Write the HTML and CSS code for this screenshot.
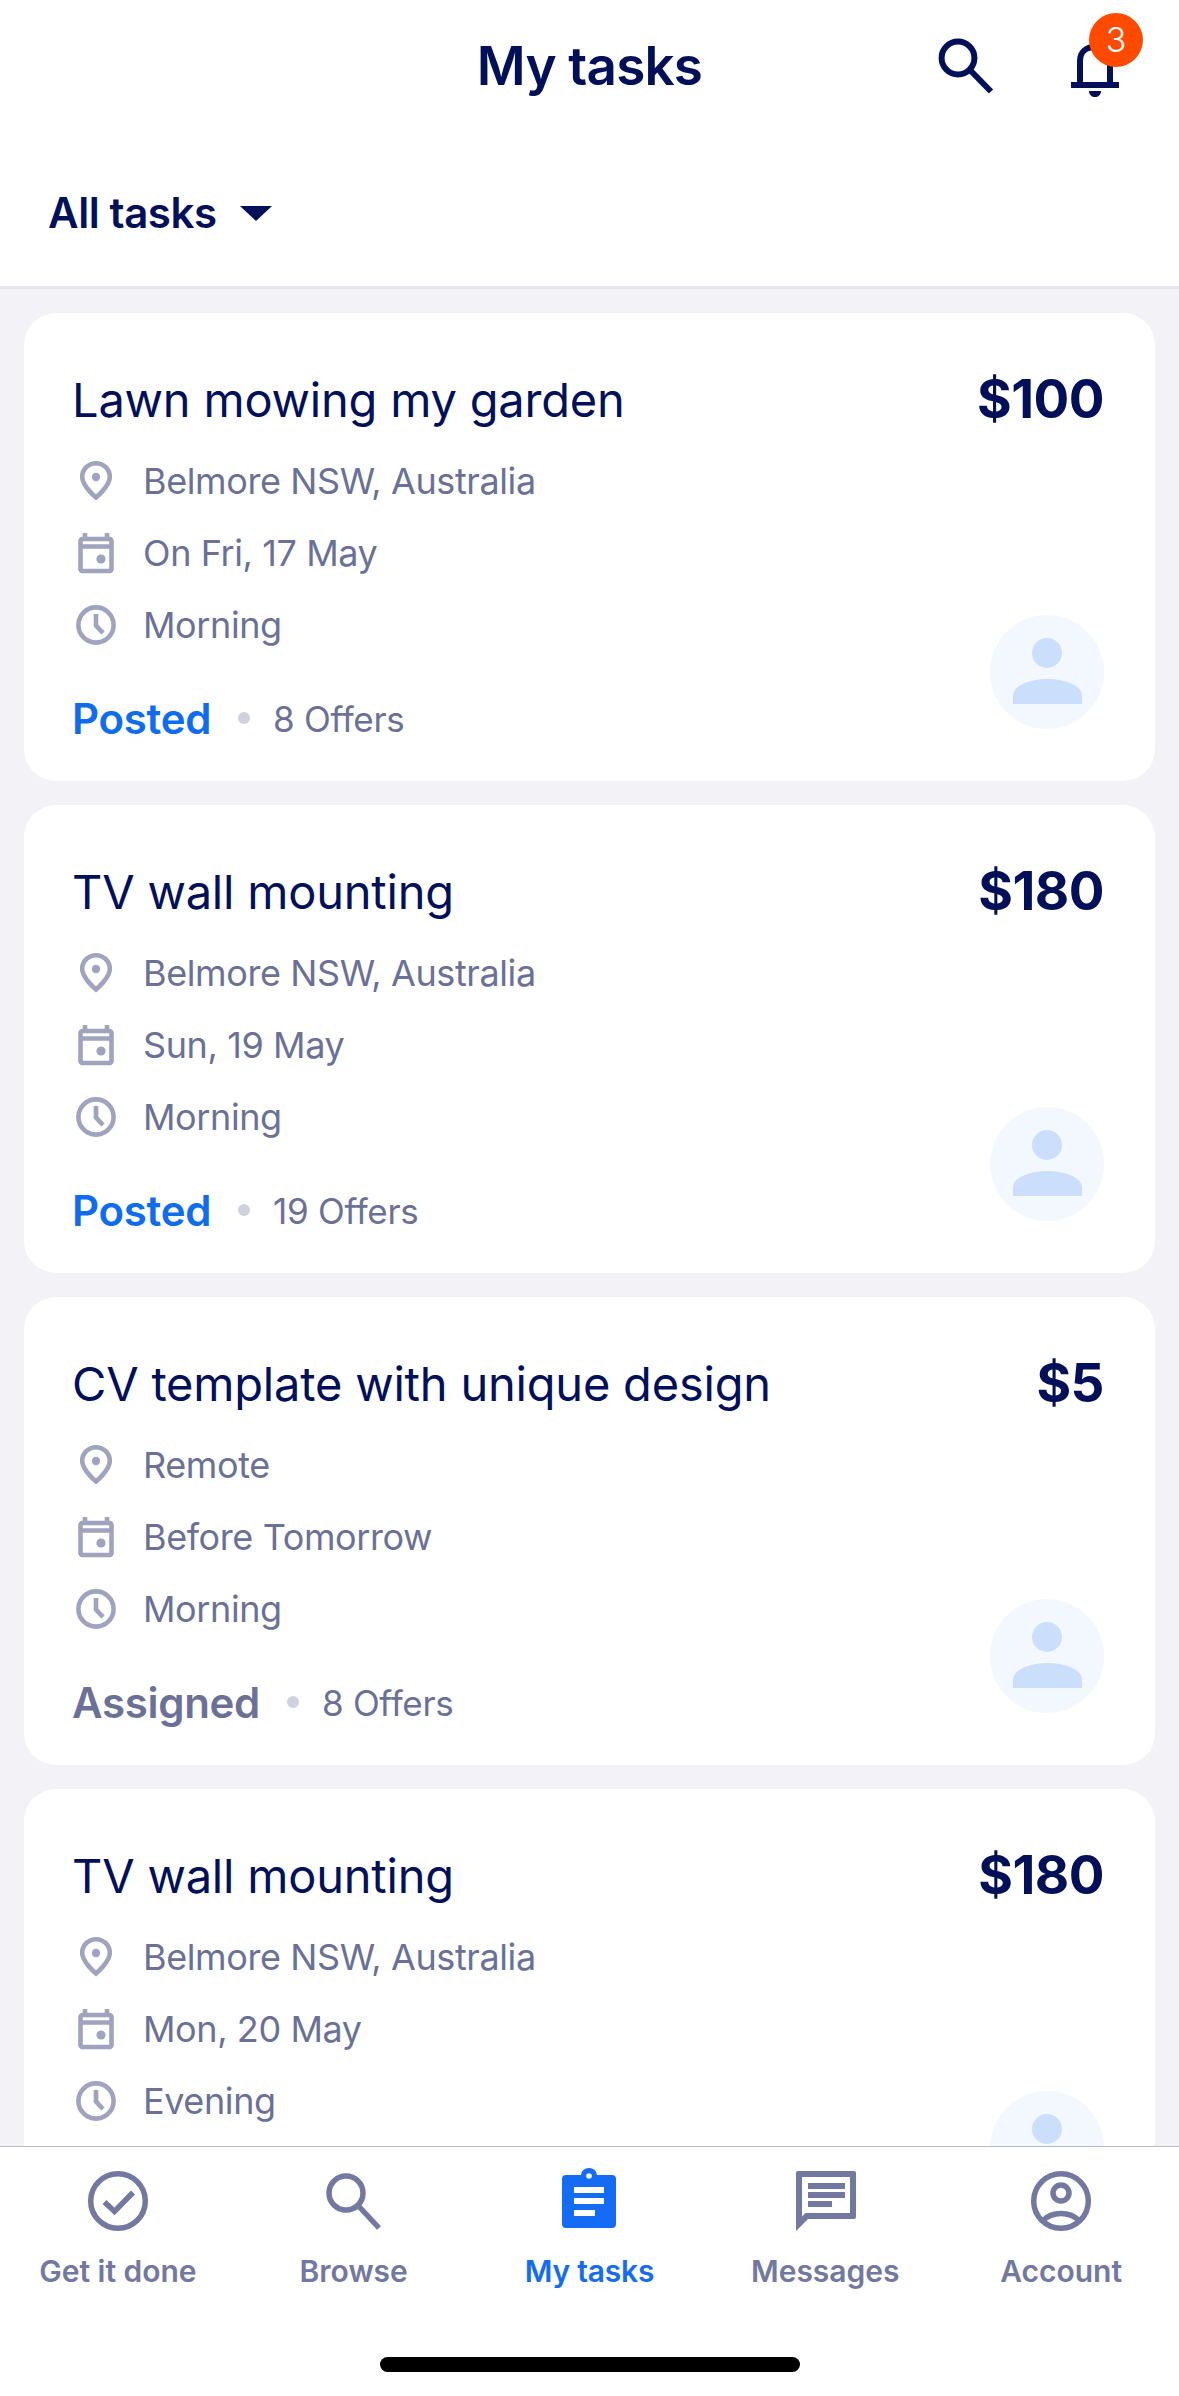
FILE: index.html
```html
<!DOCTYPE html>
<html lang="en"><head>
	<meta charset='utf-8'>
	<title>My tasks</title>
	<link rel="stylesheet" href="styles.css">
</head><body>
<svg class="defs" width="0" height="0">
	<symbol id="i-pin" viewBox="0 0 48 48"><path class="line" d="M24 40.5C24 40.5 10.2 29 10.2 20A13.8 13.8 0 0 1 37.8 20C37.8 29 24 40.5 24 40.5Z"/><circle class="solid" cx="24" cy="20" r="4.2"/></symbol>
	<symbol id="i-cal" viewBox="0 0 48 48"><rect class="line" x="8.5" y="10" width="31" height="32" rx="2"/><path class="line" d="M8 17.5H40M13 4V9M35 4V9"/><circle class="solid" cx="29" cy="30" r="4.6"/></symbol>
	<symbol id="i-clock" viewBox="0 0 48 48"><circle class="line" cx="24" cy="24" r="17.6"/><path class="line" d="M24 13V24.500L31 32"/></symbol>
</svg>
<div class="app">
	<header class="top">
		<div class="top-bar">
			<h1>My tasks</h1>
			<svg class="top-search" width="60" height="60" viewBox="0 0 60 60"><circle cx="24" cy="24" r="16.400"/><path d="M35.500 35.500L57 57.500"/></svg>
			<span class="bell">
				<svg width="48" height="60" viewBox="0 0 48 60"><path d="M9 46V22C9 13 15 8 24 8C33 8 39 13 39 22V46"/><rect class="fill" x="0" y="43" width="48" height="6"/><path class="fill" d="M18 52H30C30 56 27 58 24 58C21 58 18 56 18 52Z"/></svg>
				<span class="badge">3</span>
			</span>
		</div>
		<div class="filter">All tasks <i class="caret"></i></div>
	</header>

	<main class="tasks">
		<article class="card">
			<div class="card-main">
				<h2>Lawn mowing my garden</h2>
				<ul class="facts">
					<li><svg><use href="#i-pin"/></svg>Belmore NSW, Australia</li>
					<li><svg><use href="#i-cal"/></svg>On Fri, 17 May</li>
					<li><svg><use href="#i-clock"/></svg>Morning</li>
				</ul>
				<div class="status"><b class="posted">Posted</b><i class="dot"></i><span>8 Offers</span></div>
			</div>
			<div class="card-side">
				<div class="price">$100</div>
				<div class="avatar"><i></i><u></u></div>
			</div>
		</article>
		<article class="card">
			<div class="card-main">
				<h2>TV wall mounting</h2>
				<ul class="facts">
					<li><svg><use href="#i-pin"/></svg>Belmore NSW, Australia</li>
					<li><svg><use href="#i-cal"/></svg>Sun, 19 May</li>
					<li><svg><use href="#i-clock"/></svg>Morning</li>
				</ul>
				<div class="status"><b class="posted">Posted</b><i class="dot"></i><span>19 Offers</span></div>
			</div>
			<div class="card-side">
				<div class="price">$180</div>
				<div class="avatar"><i></i><u></u></div>
			</div>
		</article>
		<article class="card">
			<div class="card-main">
				<h2>CV template with unique design</h2>
				<ul class="facts">
					<li><svg><use href="#i-pin"/></svg>Remote</li>
					<li><svg><use href="#i-cal"/></svg>Before Tomorrow</li>
					<li><svg><use href="#i-clock"/></svg>Morning</li>
				</ul>
				<div class="status"><b class="assigned">Assigned</b><i class="dot"></i><span>8 Offers</span></div>
			</div>
			<div class="card-side">
				<div class="price">$5</div>
				<div class="avatar"><i></i><u></u></div>
			</div>
		</article>
		<article class="card">
			<div class="card-main">
				<h2>TV wall mounting</h2>
				<ul class="facts">
					<li><svg><use href="#i-pin"/></svg>Belmore NSW, Australia</li>
					<li><svg><use href="#i-cal"/></svg>Mon, 20 May</li>
					<li><svg><use href="#i-clock"/></svg>Evening</li>
				</ul>
			</div>
			<div class="card-side">
				<div class="price">$180</div>
				<div class="avatar"><i></i><u></u></div>
			</div>
		</article>
	</main>

	<nav class="tabs">
		<a class="tab">
			<svg viewBox="0 0 64 64"><circle cx="32" cy="33" r="27.300"/><path d="M18.500 34L28.500 43.500L47 24.500"/></svg>
			Get it done
		</a>
		<a class="tab">
			<svg viewBox="0 0 64 64"><circle cx="24" cy="25" r="17"/><path d="M36.500 38L57 60"/></svg>
			Browse
		</a>
		<a class="tab active">
			<svg viewBox="0 0 64 64"><path class="fill" d="M9 7H24A8 7 0 0 1 40 7H55A4 4 0 0 1 59 11V56A4 4 0 0 1 55 60H9A4 4 0 0 1 5 56V11A4 4 0 0 1 9 7Z"/><circle class="hole" cx="32" cy="8" r="2.800"/><rect class="hole" x="17" y="19" width="30" height="6"/><rect class="hole" x="17" y="30" width="30" height="6"/><rect class="hole" x="17" y="42" width="21" height="6"/></svg>
			My tasks
		</a>
		<a class="tab">
			<svg viewBox="0 0 64 64"><path class="fill" fill-rule="evenodd" d="M5 3H61A2 2 0 0 1 63 5V49A2 2 0 0 1 61 51H15L3 63V5A2 2 0 0 1 5 3ZM9 9V48.500L12.500 45H57V9Z"/><rect class="fill" x="15" y="15" width="37" height="6"/><rect class="fill" x="15" y="24" width="37" height="6"/><rect class="fill" x="15" y="33" width="24" height="6"/></svg>
			Messages
		</a>
		<a class="tab">
			<svg viewBox="0 0 64 64"><circle cx="32" cy="33" r="27.300"/><circle cx="32" cy="25" r="8"/><path d="M13.500 53C23 43 41 43 50.500 53"/></svg>
			Account
		</a>
	</nav>
	<div class="home-bar"><span></span></div>
</div>
</body></html>
```

FILE: styles.css
```css
* { box-sizing:border-box; margin:0; padding:0 }
html, body { height:100%; background:#fff }
body { font-family:Inter, 'Noto Sans', sans-serif; color:#011059 }
.defs { display:block; height:0 }
.app { width:1179px; height:2396px; display:flex; flex-direction:column; overflow:hidden }

/* header */
.top { height:289px; background:#fff; border-bottom:3px solid #e6e6ec; flex:none }
.top-bar { height:144px; display:flex; align-items:flex-start; padding-left:934px; position:relative }
.top-bar h1 { position:absolute; left:0; right:0; top:35px; line-height:62px; text-align:center; font-size:53px; font-weight:600; letter-spacing:-0.8px }
.top-search { margin-top:34px; flex:none; fill:none; stroke:#011059; stroke-width:6 }
.bell { margin:39px 0 0 77px; position:relative; display:block; width:48px; height:60px }
.bell svg { display:block; fill:none; stroke:#011059; stroke-width:6 }
.bell .fill { fill:#011059; stroke:none }
.badge { position:absolute; left:18px; top:-26px; width:54px; height:54px; border-radius:50%; background:#ff4a00; color:#fff; font-size:34px; font-weight:300; line-height:54px; text-align:center }
.filter { padding-left:48px; display:flex; align-items:center; font-size:42px; font-weight:600; line-height:52px; letter-spacing:-0.4px; margin-top:43px }
.caret { width:0; height:0; margin-left:23px; border-style:solid; border-width:15px 16px 0; border-color:#011059 transparent transparent }

/* task cards */
.tasks { flex:1; min-height:0; overflow:hidden; background:#f2f2f7; padding:24px 24px 0; display:flex; flex-direction:column; gap:24px }
.card { flex:none; height:468px; background:#fff; border-radius:32px; padding:60px 51px 33px 48px; display:flex; justify-content:space-between }
.card h2 { font-size:47px; font-weight:400; line-height:54px; letter-spacing:-0.2px; white-space:nowrap }
.facts { list-style:none; margin-top:18px }
.facts li { height:72px; display:flex; align-items:center; gap:23px; font-size:36px; color:#6b7196; letter-spacing:-0.4px }
.facts svg { width:48px; height:48px; flex:none }
.line { fill:none; stroke:#9fa3bd; stroke-width:4.6 }
.solid { fill:#9fa3bd }
.status { margin-top:27px; height:60px; display:flex; align-items:center; font-size:35px; color:#6b7196; letter-spacing:-0.3px }
.status b { font-size:42px; font-weight:600 }
.status span { padding-top:2px }
.posted { color:#0d6cf2 }
.assigned { color:#6b7196 }
.dot { width:12px; height:12px; border-radius:50%; background:#cfd1de; margin:0 23px 0 27px }
.card-side { display:flex; flex-direction:column; justify-content:space-between; align-items:flex-end; padding-bottom:19px }
.price { font-size:53px; font-weight:700; line-height:52px; letter-spacing:-0.5px }
.avatar { width:114px; height:114px; border-radius:50%; background:#f3f7fe; display:flex; flex-direction:column; align-items:center; padding-top:23px }
.avatar i { display:block; width:30px; height:30px; border-radius:50%; background:#cbdefc }
.avatar u { display:block; width:69px; height:25px; margin-top:11px; border-radius:50% 50% 0 0 / 65% 65% 0 0; background:#cbdefc }

/* bottom tabs */
.tabs { flex:none; height:186px; background:#fff; border-top:1px solid #bbb; display:grid; grid-template-columns:repeat(5, 235.8px); padding-top:21px }
.tab { display:flex; flex-direction:column; align-items:center; font-size:30px; font-weight:600; line-height:36px; color:#7278a0 }
.tab svg { width:64px; height:64px; margin-bottom:21px; fill:none; stroke:#7278a0; stroke-width:5.500 }
.tab .fill { fill:#7278a0; stroke:none }
.tab.active { color:#146cf5; letter-spacing:-0.2px }
.tab.active .fill { fill:#146cf5 }
.tab .hole { fill:#fff; stroke:none }
.home-bar { flex:none; height:64px; background:#fff; display:flex; justify-content:center }
.home-bar span { display:block; width:420px; height:15px; border-radius:8px; background:#000; margin-top:25px }
```
